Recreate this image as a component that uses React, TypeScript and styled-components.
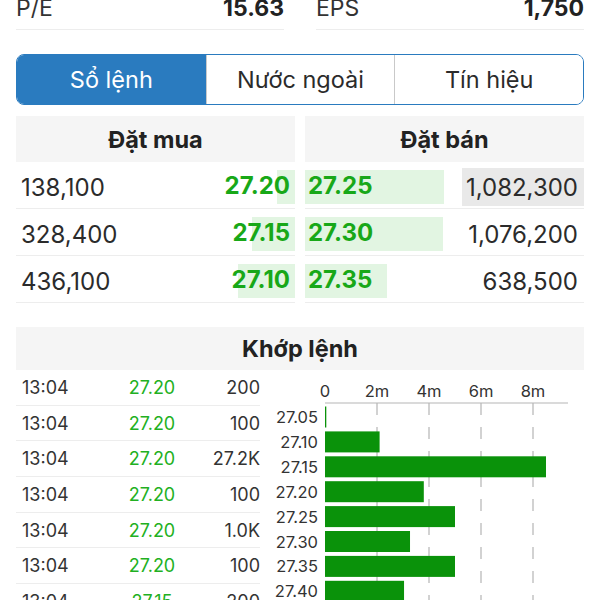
import styled, { createGlobalStyle } from 'styled-components';

const GlobalStyle = createGlobalStyle`
	html, body {
		margin: 0;
		padding: 0;
		background: #ffffff;
	}
	body {
		width: 600px;
		height: 600px;
		overflow: hidden;
		font-family: Inter, "Noto Sans", "Liberation Sans", sans-serif;
		color: #2b2b2b;
	}
`;

const Page = styled.div`
	padding: 0 16px;
	box-sizing: border-box;
	width: 600px;
`;

const StatRow = styled.div`
	display: grid;
	grid-template-columns: minmax(0, 1fr) minmax(0, 1fr);
	column-gap: 32px;
	margin-top: -3px;
`;

const StatCell = styled.div`
	display: flex;
	justify-content: space-between;
	align-items: flex-start;
	height: 33px;
	border-bottom: 1px solid #ededed;
	box-sizing: border-box;
	font-size: 23px;
	line-height: 23px;
`;

const StatLabel = styled.span`
	color: #333;
`;

const StatValue = styled.span`
	font-weight: 700;
	color: #222;
`;

const Segmented = styled.div`
	display: grid;
	grid-template-columns: repeat(3, minmax(0, 1fr));
	margin-top: 24px;
	height: 51px;
	border: 1.5px solid #2a7bbf;
	border-radius: 8px;
	overflow: hidden;
	box-sizing: border-box;
`;

const Segment = styled.div<{ $active?: boolean }>`
	display: flex;
	align-items: center;
	justify-content: center;
	font-size: 23.5px;
	background: ${(p) => (p.$active ? '#2a7bbf' : '#ffffff')};
	color: ${(p) => (p.$active ? '#ffffff' : '#2b2b2b')};
	& + & {
		border-left: 1px solid #c9c9c9;
	}
`;

const Book = styled.div`
	display: grid;
	grid-template-columns: minmax(0, 1fr) minmax(0, 1fr);
	column-gap: 10px;
	margin-top: 11px;
`;

const Side = styled.div`
	display: flex;
	flex-direction: column;
`;

const SectionHeader = styled.div`
	height: 46px;
	display: flex;
	align-items: center;
	justify-content: center;
	background: #f5f5f5;
	font-size: 23.5px;
	font-weight: 700;
	color: #222;
`;

const BookRow = styled.div`
	height: 47px;
	display: flex;
	align-items: center;
	justify-content: space-between;
	border-bottom: 1px solid #ededed;
	box-sizing: border-box;
	font-size: 24px;
`;

const Volume = styled.span<{ $align: 'left' | 'right'; $hot?: boolean }>`
	align-self: stretch;
	display: flex;
	align-items: center;
	margin: 6px 0 2px;
	padding: ${(p) => (p.$align === 'left' ? '0 0 0 5px' : '0 6px 0 4px')};
	background: ${(p) => (p.$hot ? '#e9e9e9' : 'transparent')};
	color: #2b2b2b;
`;

const PriceCell = styled.span<{ $side: 'bid' | 'ask' }>`
	align-self: stretch;
	position: relative;
	display: flex;
	align-items: center;
	justify-content: ${(p) => (p.$side === 'bid' ? 'flex-end' : 'flex-start')};
	padding: ${(p) => (p.$side === 'bid' ? '0 5px 0 0' : '0 0 0 3px')};
	font-weight: 700;
	color: #18a818;
`;

const DepthBar = styled.span<{ $side: 'bid' | 'ask' }>`
	position: absolute;
	top: 8px;
	bottom: 4px;
	${(p) => (p.$side === 'bid' ? 'right: 0;' : 'left: 0;')}
	background: #e2f5e2;
`;

const PriceText = styled.span`
	position: relative;
`;

const Matched = styled.div`
	margin-top: 24px;
`;

const MatchedHeader = styled(SectionHeader)`
	height: 43px;
`;

const MatchedBody = styled.div`
	display: grid;
	grid-template-columns: 244px 1fr;
`;

const TradeList = styled.div`
	display: flex;
	flex-direction: column;
`;

const TradeRow = styled.div`
	display: grid;
	grid-template-columns: 92px 76px 70px;
	align-items: center;
	height: 35.7px;
	padding-left: 6px;
	border-bottom: 1px solid #ededed;
	box-sizing: border-box;
	font-size: 18px;
	color: #333;
`;

const TradePrice = styled.span`
	color: #22b022;
	text-align: center;
`;

const TradeVolume = styled.span`
	text-align: right;
`;

const Chart = styled.svg`
	display: block;
	width: 340px;
	height: 230px;
	font-family: Inter, "Noto Sans", "Liberation Sans", sans-serif;
`;

const bids = [
	{ vol: '138,100', price: '27.20', bar: 18 },
	{ vol: '328,400', price: '27.15', bar: 43 },
	{ vol: '436,100', price: '27.10', bar: 57 },
];

const asks = [
	{ vol: '1,082,300', price: '27.25', bar: 139, hot: true },
	{ vol: '1,076,200', price: '27.30', bar: 138 },
	{ vol: '638,500', price: '27.35', bar: 82 },
];

const trades = [
	['13:04', '27.20', '200'],
	['13:04', '27.20', '100'],
	['13:04', '27.20', '27.2K'],
	['13:04', '27.20', '100'],
	['13:04', '27.20', '1.0K'],
	['13:04', '27.20', '100'],
	['13:04', '27.15', '200'],
];

const volumes = [
	{ price: '27.05', m: 0.05 },
	{ price: '27.10', m: 2.1 },
	{ price: '27.15', m: 8.5 },
	{ price: '27.20', m: 3.8 },
	{ price: '27.25', m: 5.0 },
	{ price: '27.30', m: 3.27 },
	{ price: '27.35', m: 5.0 },
	{ price: '27.40', m: 3.04 },
];

// chart coords: x0 is the zero line, 26px per million
const X0 = 65;
const PER_M = 26;
const AXIS_Y = 33;
const STEP = 24.9;

const VolumeChart = () => (
	<Chart viewBox="0 0 340 230">
		{[2, 4, 6, 8].map((m) => (
			<line
				key={m}
				x1={X0 + m * PER_M}
				x2={X0 + m * PER_M}
				y1={AXIS_Y}
				y2={230}
				stroke="#b5b5b5"
				strokeWidth={1.2}
				strokeDasharray="12 12"
			/>
		))}
		<line x1={X0} x2={308} y1={AXIS_Y} y2={AXIS_Y} stroke="#b5b5b5" strokeWidth={1.2} />
		{[0, 2, 4, 6, 8].map((m) => (
			<text
				key={m}
				x={X0 + m * PER_M}
				y={AXIS_Y - 6}
				textAnchor="middle"
				fontSize={16.5}
				fill="#333"
			>
				{m === 0 ? '0' : `${m}m`}
			</text>
		))}
		{volumes.map((v, i) => {
			const cy = AXIS_Y + 14 + i * STEP;
			return (
				<g key={v.price}>
					<text x={X0 - 7} y={cy + 6} textAnchor="end" fontSize={16.5} fill="#333">
						{v.price}
					</text>
					<rect
						x={X0}
						y={cy - 10.5}
						width={Math.max(v.m * PER_M, 1.2)}
						height={21}
						fill="#0a920a"
					/>
				</g>
			);
		})}
	</Chart>
);

const App = () => {
	return (
		<Page>
			<GlobalStyle />
			<StatRow>
				<StatCell>
					<StatLabel>P/E</StatLabel>
					<StatValue>15.63</StatValue>
				</StatCell>
				<StatCell>
					<StatLabel>EPS</StatLabel>
					<StatValue>1,750</StatValue>
				</StatCell>
			</StatRow>

			<Segmented>
				<Segment $active>Sổ lệnh</Segment>
				<Segment>Nước ngoài</Segment>
				<Segment>Tín hiệu</Segment>
			</Segmented>

			<Book>
				<Side>
					<SectionHeader>Đặt mua</SectionHeader>
					{bids.map((b) => (
						<BookRow key={b.price}>
							<Volume $align="left">{b.vol}</Volume>
							<PriceCell $side="bid">
								<DepthBar $side="bid" style={{ width: b.bar }} />
								<PriceText>{b.price}</PriceText>
							</PriceCell>
						</BookRow>
					))}
				</Side>
				<Side>
					<SectionHeader>Đặt bán</SectionHeader>
					{asks.map((a) => (
						<BookRow key={a.price}>
							<PriceCell $side="ask">
								<DepthBar $side="ask" style={{ width: a.bar }} />
								<PriceText>{a.price}</PriceText>
							</PriceCell>
							<Volume $align="right" $hot={a.hot}>
								{a.vol}
							</Volume>
						</BookRow>
					))}
				</Side>
			</Book>

			<Matched>
				<MatchedHeader>Khớp lệnh</MatchedHeader>
				<MatchedBody>
					<TradeList>
						{trades.map((t, i) => (
							<TradeRow key={i}>
								<span>{t[0]}</span>
								<TradePrice>{t[1]}</TradePrice>
								<TradeVolume>{t[2]}</TradeVolume>
							</TradeRow>
						))}
					</TradeList>
					<VolumeChart />
				</MatchedBody>
			</Matched>
		</Page>
	);
};

export default App;
